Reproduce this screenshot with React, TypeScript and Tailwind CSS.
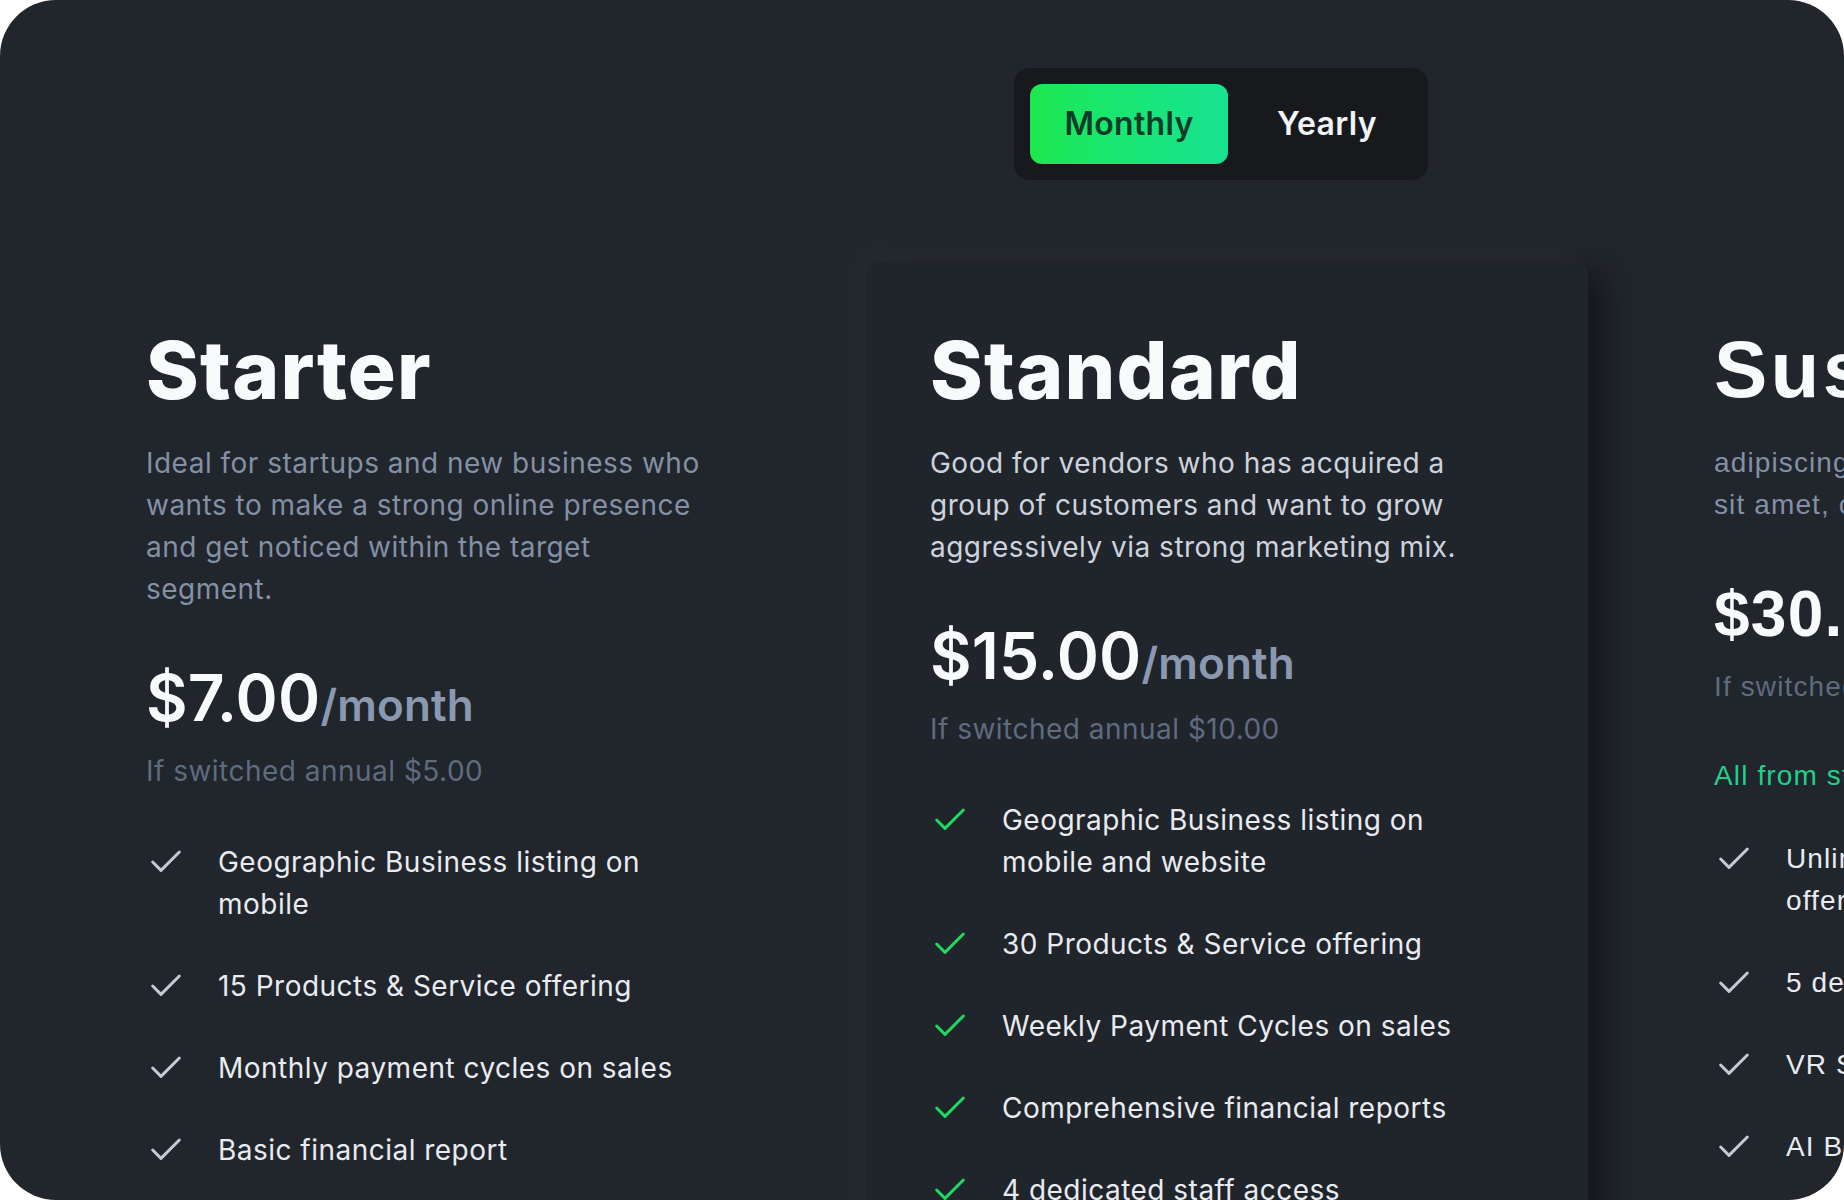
import React from "react";

type Plan = {
  name: string;
  desc: React.ReactNode;
  price: string;
  annual: string;
  extra?: string;
  features: string[];
  featured?: boolean;
  alt?: boolean;
};

const plans: Plan[] = [
  {
    name: "Starter",
    desc: "Ideal for startups and new business who wants to make a strong online presence and get noticed within the target segment.",
    price: "$7.00",
    annual: "If switched annual $5.00",
    features: [
      "Geographic Business listing on mobile",
      "15 Products & Service offering",
      "Monthly payment cycles on sales",
      "Basic financial report",
    ],
  },
  {
    name: "Standard",
    desc: "Good for vendors who has acquired a group of customers and want to grow aggressively via strong marketing mix.",
    price: "$15.00",
    annual: "If switched annual $10.00",
    featured: true,
    features: [
      "Geographic Business listing on mobile and website",
      "30 Products & Service offering",
      "Weekly Payment Cycles on sales",
      "Comprehensive financial reports",
      "4 dedicated staff access",
    ],
  },
  {
    name: "Sustain",
    desc: (
      <>
        adipiscing elit, sed do eiusmod
        <br />
        sit amet, consectetur elit.
      </>
    ),
    price: "$30.00",
    annual: "If switched annual $20.00",
    extra: "All from standard, and",
    alt: true,
    features: [
      "Unlimited Products & Service offering",
      "5 dedicated staff access",
      "VR Showroom",
      "AI Bot assistant",
    ],
  },
];

const Check = ({ green }: { green?: boolean }) => (
  <svg
    width="40"
    height="40"
    viewBox="0 0 24 24"
    fill="none"
    stroke={green ? "#1fd862" : "#c3cad5"}
    strokeWidth="1.8"
    strokeLinecap="round"
    strokeLinejoin="round"
    className="shrink-0 mt-[1px]"
  >
    <path d="M20 6 9 17l-5-5" />
  </svg>
);

const PlanCard = ({ p }: { p: Plan }) => {
  const font = p.alt
    ? "font-['Liberation_Sans',Arial,sans-serif] tracking-[0.07em]"
    : "font-['Inter',sans-serif] tracking-[0.03em]";
  return (
    <div
      className={
        "h-[1000px] rounded-xl px-[63px] pt-[69px] " +
        font +
        (p.featured
          ? " bg-[#20242b] shadow-[-10px_-10px_30px_rgba(255,255,255,0.035),14px_14px_30px_rgba(0,0,0,0.45)]"
          : "")
      }
    >
      <h2
        className={
          "text-[80px] leading-[80px] font-extrabold text-[#f8fafc] whitespace-nowrap " +
          (p.alt ? "tracking-[0.04em]" : "tracking-[0.015em]")
        }
      >
        {p.name}
      </h2>
      <p
        className={
          "mt-[32px] max-w-[570px] text-[28px] leading-[42px] " +
          (p.alt ? "whitespace-nowrap " : "") +
          (p.featured ? "text-[#cdd3dd]" : "text-[#8390a5]")
        }
      >
        {p.desc}
      </p>
      <div
        className={
          "mt-[56px] flex items-baseline h-[64px] whitespace-nowrap " +
          (p.alt ? "tracking-[0.08em]" : "tracking-[0.01em]")
        }
      >
        <span className="text-[64px] leading-[64px] font-semibold text-[#f8fafc]">
          {p.price}
        </span>
        <span className="text-[44px] leading-[44px] font-semibold text-[#8b99b0]">
          /month
        </span>
      </div>
      <p className="mt-[20px] text-[28px] leading-[42px] text-[#5f6b7e] whitespace-nowrap">
        {p.annual}
      </p>
      {p.extra && (
        <p className="mt-[47px] text-[28px] leading-[42px] text-[#20d08a] whitespace-nowrap">
          {p.extra}
        </p>
      )}
      <ul
        className={
          "flex flex-col gap-[40px] " + (p.extra ? "mt-[41px]" : "mt-[49px]")
        }
      >
        {p.features.map((f) => (
          <li key={f} className="flex items-start gap-[32px]">
            <Check green={p.featured} />
            <span className="max-w-[490px] text-[28px] leading-[42px] text-[#e8ebf0]">
              {f}
            </span>
          </li>
        ))}
      </ul>
    </div>
  );
};

export default function App() {
  return (
    <div className="bg-white w-full h-[1200px]">
      <div className="h-[1200px] w-full overflow-hidden rounded-[56px] bg-[#21252c]">
        <div className="w-[2289px] ml-[83px]">
          <div className="flex justify-center pt-[68px]">
            <div className="mr-[13px] flex p-4 rounded-2xl bg-[#18191d] font-['Inter',sans-serif] tracking-[0.02em]">
              <button className="w-[198px] h-[80px] rounded-xl bg-gradient-to-r from-[#1de84e] to-[#17e392] text-[32px] font-semibold text-[#0d3b2a]">
                Monthly
              </button>
              <button className="w-[184px] h-[80px] pl-[14px] text-[32px] font-semibold text-[#f1f4f8]">
                Yearly
              </button>
            </div>
          </div>
          <div className="mt-[81px] grid grid-cols-3 gap-[63px]">
            {plans.map((p) => (
              <PlanCard key={p.name} p={p} />
            ))}
          </div>
        </div>
      </div>
    </div>
  );
}
